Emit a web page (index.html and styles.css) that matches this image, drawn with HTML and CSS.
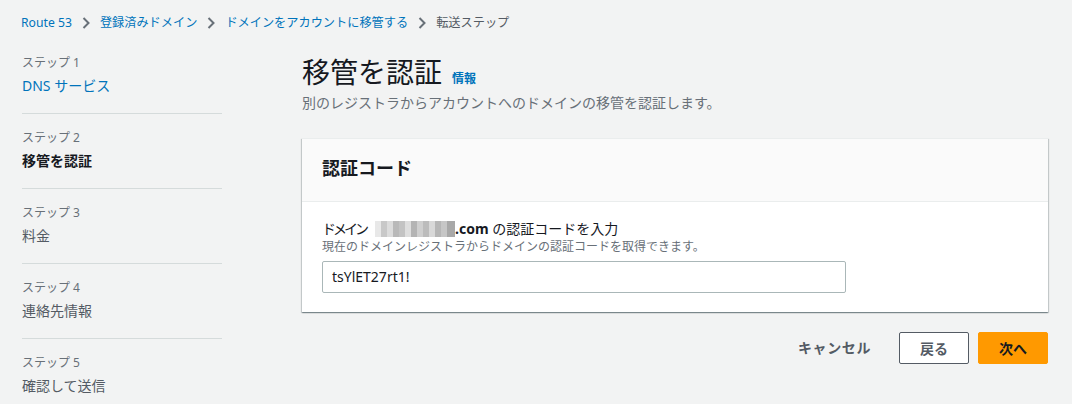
FILE: index.html
```html
<!DOCTYPE html>
<html lang="ja">
<head>
<meta charset="utf-8">
<link rel="stylesheet" href="styles.css">
</head>
<body>
<div class="page">
  <nav class="crumbs">
    <a class="crumb-link">Route 53</a>
    <svg class="chev" viewBox="0 0 8 12"><path d="M1.5 1l5 5-5 5" fill="none" stroke="#687078" stroke-width="2"/></svg>
    <a class="crumb-link">登録済みドメイン</a>
    <svg class="chev" viewBox="0 0 8 12"><path d="M1.5 1l5 5-5 5" fill="none" stroke="#687078" stroke-width="2"/></svg>
    <a class="crumb-link">ドメインをアカウントに移管する</a>
    <svg class="chev" viewBox="0 0 8 12"><path d="M1.5 1l5 5-5 5" fill="none" stroke="#687078" stroke-width="2"/></svg>
    <span class="crumb-current">転送ステップ</span>
  </nav>
  <div class="layout">
    <ul class="steps">
      <li class="step"><div class="step-num">ステップ 1</div><div class="step-name link">DNS サービス</div></li>
      <li class="step"><div class="step-num">ステップ 2</div><div class="step-name active">移管を認証</div></li>
      <li class="step"><div class="step-num">ステップ 3</div><div class="step-name">料金</div></li>
      <li class="step"><div class="step-num">ステップ 4</div><div class="step-name">連絡先情報</div></li>
      <li class="step"><div class="step-num">ステップ 5</div><div class="step-name">確認して送信</div></li>
    </ul>
    <main class="main">
      <div class="head">
        <h1 class="title">移管を認証</h1>
        <a class="info">情報</a>
      </div>
      <p class="desc">別のレジストラからアカウントへのドメインの移管を認証します。</p>
      <section class="card">
        <div class="card-head"><h2 class="card-title">認証コード</h2></div>
        <div class="card-body">
          <div class="label"><span class="kana">ドメイン</span><span class="blur"></span><b class="tld">.com</b> の認証コードを入力</div>
          <div class="hint">現在のドメインレジストラからドメインの認証コードを取得できます。</div>
          <div class="input">tsYlET27rt1!</div>
        </div>
      </section>
      <div class="actions">
        <span class="btn-link">キャンセル</span>
        <span class="btn btn-normal">戻る</span>
        <span class="btn btn-primary">次へ</span>
      </div>
    </main>
  </div>
</div>
</body>
</html>
```
FILE: styles.css
```css
* { box-sizing: border-box; }
html, body { margin: 0; padding: 0; }
body {
  background: #f2f3f3;
  font-family: "Noto Sans", "Noto Sans CJK JP", sans-serif;
  color: #16191f;
  font-size: 14px;
  width: 1072px;
  height: 404px;
  overflow: hidden;
}
.page { padding: 13px 24px 0 21px; }
.crumbs {
  display: flex;
  align-items: center;
  height: 20px;
  font-size: 12.2px;
  line-height: 20px;
  gap: 10px;
}
.crumb-link { color: #0073bb; }
.crumb-current { color: #545b64; }
.chev { width: 8px; height: 12px; }
.layout {
  display: grid;
  grid-template-columns: 201px 746px;
  column-gap: 80px;
  margin-top: 18px;
}
.steps { list-style: none; margin: 0; padding: 0 0 0 1px; }
.step {
  height: 75px;
  border-top: 1px solid #d5dbdb;
  padding-top: 16px;
}
.step:first-child { height: 62px; border-top: none; padding-top: 4px; }
.step-num { font-size: 12px; line-height: 16px; color: #687078; }
.step-name { font-size: 14px; line-height: 20px; margin-top: 5px; color: #545b64; }
.step-name.link { color: #0073bb; }
.step-name.active { color: #16191f; font-weight: 700; }
.main { padding-top: 1px; }
.head { display: flex; align-items: baseline; gap: 10px; height: 40px; }
.title { margin: 0; font-size: 28px; line-height: 40px; font-weight: 400; color: #16191f; }
.info { font-size: 12px; font-weight: 700; color: #0073bb; }
.desc { margin: 0; font-size: 14px; line-height: 22px; color: #687078; }
.card {
  margin-top: 24px;
  background: #fff;
  border-top: 1px solid #eaeded;
  box-shadow: 0 1px 1px 0 rgba(0,28,36,.3), 1px 1px 1px 0 rgba(0,28,36,.15), -1px 1px 1px 0 rgba(0,28,36,.15);
}
.card-head {
  background: #fafafa;
  border-bottom: 1px solid #eaeded;
  height: 63px;
  padding: 17px 20px 0;
}
.card-title { margin: 0; font-size: 18px; line-height: 24px; font-weight: 700; }
.card-body { padding: 17px 20px 19px; }
.label { font-size: 14px; line-height: 20px; color: #16191f; display: flex; align-items: center; white-space: pre; }
.kana { letter-spacing: -3px; margin-right: 9px; }
.tld { font-weight: 700; }
.blur {
  display: inline-block;
  width: 80px;
  height: 16px;
  background:
    linear-gradient(90deg, #e8e8e8 0 6px, #c8c8c8 6px 12px, #dcdcdc 12px 18px, #b9b9b9 18px 24px, #c3c3c3 24px 30px, #dedede 30px 36px, #b4b4b4 36px 42px, #cfcfcf 42px 48px, #bcbcbc 48px 54px, #d8d8d8 54px 60px, #b6b6b6 60px 66px, #c6c6c6 66px 72px, #a8a8a8 72px 80px);
}
.hint { font-size: 12px; line-height: 16px; color: #687078; margin-top: 0; }
.input {
  margin-top: 6px;
  width: 524px;
  height: 32px;
  border: 1px solid #aab7b8;
  border-radius: 2px;
  background: #fff;
  padding: 0 9px;
  font-size: 14px;
  line-height: 30px;
  color: #16191f;
}
.actions {
  display: flex;
  justify-content: flex-end;
  align-items: center;
  margin-top: 20px;
  gap: 9px;
}
.btn-link { font-weight: 700; color: #545b64; padding: 0 19px 0 0; line-height: 32px; letter-spacing: 0.6px; }
.btn {
  display: inline-flex;
  align-items: center;
  justify-content: center;
  width: 70px;
  height: 32px;
  border-radius: 2px;
  font-weight: 700;
  font-size: 14px;
}
.btn-normal { background: #fff; border: 1px solid #545b64; color: #545b64; }
.btn-primary { background: #ff9900; border: 1px solid #ff9900; color: #16191f; }
```
